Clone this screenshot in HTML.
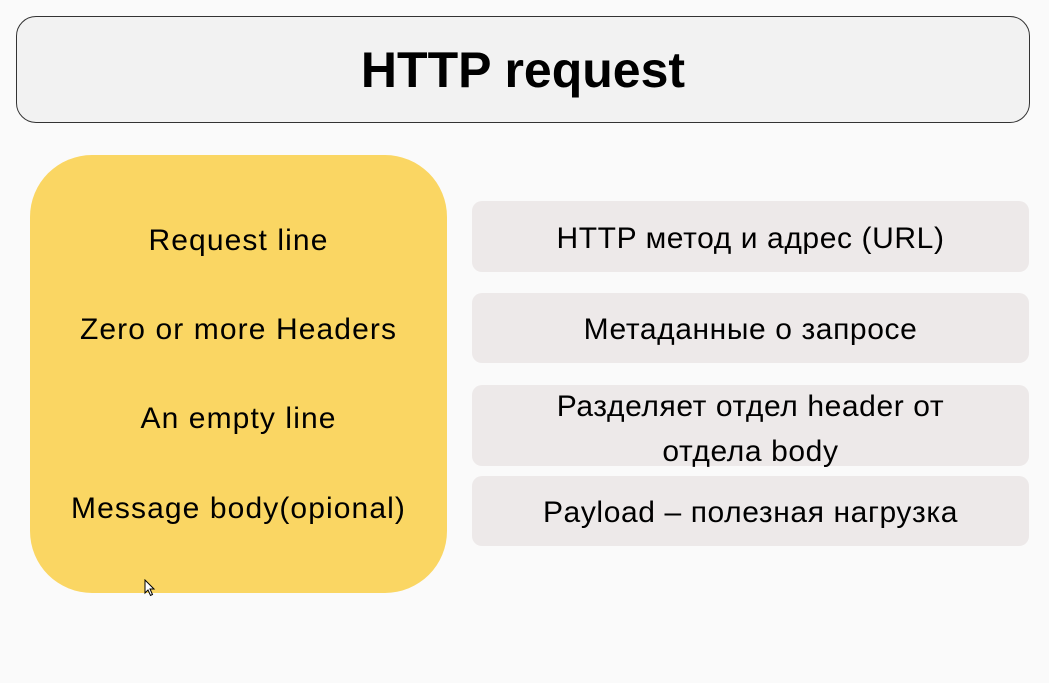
<!DOCTYPE html>
<html><head><meta charset="utf-8"><style>
body{margin:0;width:1049px;height:683px;background:#fafafa;font-family:"Liberation Sans",sans-serif;position:relative;overflow:hidden;color:#000}
.h{position:absolute;left:16px;top:16px;width:1012px;height:105px;border:1px solid #333;border-radius:20px;background:#f2f2f2;display:flex;align-items:center;justify-content:center;font-weight:bold;font-size:50px}
.y{position:absolute;left:30px;top:155px;width:417px;height:438px;border-radius:62px;background:#fad663}
.t{position:absolute;left:0px;width:477px;text-align:center;font-size:30px;letter-spacing:1.1px}
.g{position:absolute;left:472px;width:557px;background:#ede9e9;border-radius:10px;display:flex;align-items:center;justify-content:center;text-align:center;font-size:30px;letter-spacing:0.6px;line-height:45px}
</style></head><body>
<div class="h">HTTP request</div>
<div class="y"></div>
<div class="t" style="top:224px">Request line</div>
<div class="t" style="top:313px">Zero or more Headers</div>
<div class="t" style="top:402px">An empty line</div>
<div class="t" style="top:492px">Message body(opional)</div>
<div class="g" style="top:201px;height:71px"><div style="margin-top:3px">HTTP метод и адрес (URL)</div></div>
<div class="g" style="top:293px;height:70px"><div style="margin-top:3px">Метаданные о запросе</div></div>
<div class="g" style="top:385px;height:81px;align-items:flex-start"><div style="margin-top:-1px">Разделяет отдел header от<br>отдела body</div></div>
<div class="g" style="top:476px;height:70px"><div style="margin-top:3px">Payload – полезная нагрузка</div></div>
<svg style="position:absolute;left:144px;top:579px" width="12" height="18" viewBox="0 0 12 18"><path d="M1 1 L1 14 L4 11 L6.5 16.5 L8.5 15.5 L6 10 L10 10 Z" fill="#fff" stroke="#000" stroke-width="1"/></svg>
</body></html>
